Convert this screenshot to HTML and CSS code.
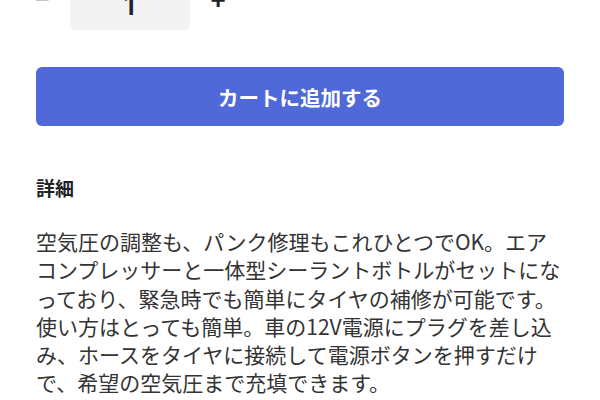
FILE: index.html
```html
<!DOCTYPE html>
<html lang="ja">
<head>
    <meta charset="UTF-8">
    <meta name="viewport" content="width=device-width, initial-scale=1.0">
    <title>商品詳細</title>
    <link rel="stylesheet" href="styles.css">
</head>
<body>
    <div class="container">
        <div class="quantity">
            <button class="qty-btn" disabled>−</button>
            <div class="qty-value">1</div>
            <button class="qty-btn">+</button>
        </div>

        <button class="cart-button">カートに追加する</button>

        <div class="details">
            <h3>詳細</h3>
            <p>空気圧の調整も、パンク修理もこれひとつでOK。エアコンプレッサーと一体型シーラントボトルがセットになっており、緊急時でも簡単にタイヤの補修が可能です。使い方はとっても簡単。車の12V電源にプラグを差し込み、ホースをタイヤに接続して電源ボタンを押すだけで、希望の空気圧まで充填できます。</p>
        </div>
    </div>
</body>
</html>
```

FILE: styles.css
```css
body {
    margin: 0;
    font-family: "Noto Sans CJK JP", "Noto Sans", sans-serif;
    background-color: #fff;
    color: #333;
}

.container {
    padding: 0 36px;
    margin-top: -30px;
}

.quantity {
    display: flex;
    align-items: center;
    gap: 22px;
    height: 60px;
}

.qty-btn {
    width: 12px;
    padding: 0;
    border: none;
    background: none;
    font-family: "Liberation Sans", sans-serif;
    font-size: 26px;
    font-weight: bold;
    color: #222;
    cursor: pointer;
    display: flex;
    justify-content: center;
}

.qty-btn:disabled {
    color: #c4c4c4;
    font-weight: normal;
}

.qty-value {
    box-sizing: border-box;
    width: 120px;
    height: 60px;
    padding-top: 8px;
    display: flex;
    align-items: center;
    justify-content: center;
    background-color: #f3f3f3;
    border-radius: 6px;
    font-family: "Noto Sans", sans-serif;
    font-size: 28px;
    font-weight: 600;
    color: #1f2333;
}

.cart-button {
    display: block;
    width: 100%;
    height: 59px;
    margin-top: 37px;
    border: none;
    border-radius: 6px;
    background-color: #4f69d9;
    color: #fff;
    font-family: "Noto Sans CJK JP", sans-serif;
    font-size: 20.5px;
    font-weight: bold;
    cursor: pointer;
}

.details h3 {
    margin: 48px 0 0;
    font-size: 19px;
    line-height: 27px;
    font-weight: bold;
    color: #222;
}

.details p {
    margin: 26px 0 0;
    font-size: 21px;
    line-height: 28.3px;
}
```
